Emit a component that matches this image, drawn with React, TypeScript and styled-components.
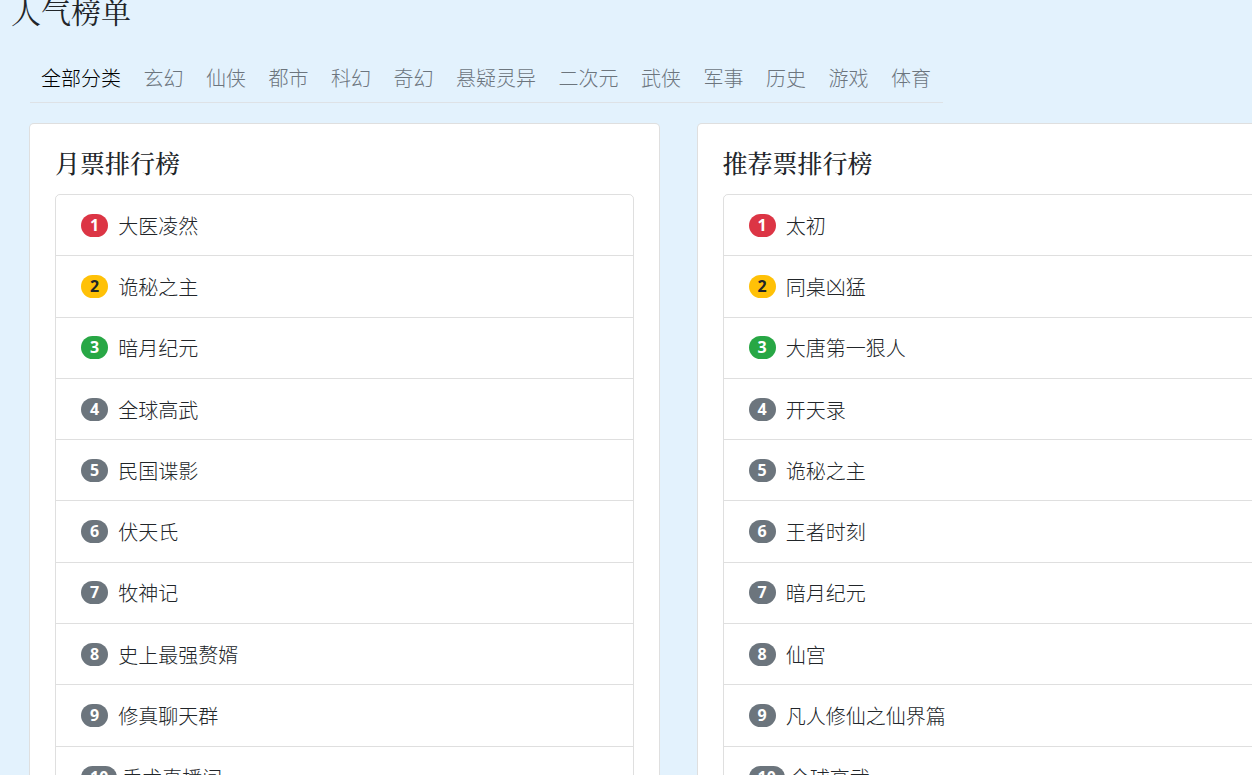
import React from "react";
import styled, { createGlobalStyle } from "styled-components";

const GlobalStyle = createGlobalStyle`
  *, *::before, *::after { box-sizing: border-box; }
  body {
    margin: 0;
    background: #e3f2fd;
    color: #212529;
    font-family: "Noto Sans", "Noto Sans CJK SC", sans-serif;
    font-size: 20px;
    font-weight: 300;
    line-height: 30px;
  }
`;

const Page = styled.div`
  height: 100vh;
  overflow: hidden;
`;

const PageTitle = styled.h1`
  margin: 0;
  padding-left: 11px;
  font-family: "Noto Serif CJK SC", "Noto Serif SC", "Noto Sans CJK SC", serif;
  font-size: 30px;
  font-weight: 400;
  line-height: 20px;
`;

const Tabs = styled.nav`
  display: flex;
  justify-content: space-between;
  max-width: 913px;
  margin: 34px 0 20px 30px;
  padding: 10px 12px 8px 11px;
  border-bottom: 1px solid #dee2e6;
`;

const Tab = styled.a<{ $active?: boolean }>`
  color: ${(p) => (p.$active ? "#000" : "#6c757d")};
  text-decoration: none;
  white-space: nowrap;
`;

const Boards = styled.main`
  display: grid;
  grid-template-columns: 1fr 1fr;
  gap: 37px;
  margin: 0 -75px 0 29px;
`;

const Card = styled.section`
  padding: 21px 25px 25px;
  background: #fff;
  border: 1px solid rgba(0, 0, 0, 0.125);
  border-radius: 5px;
`;

const CardTitle = styled.h2`
  margin: 0 0 14px;
  font-family: "Noto Serif CJK SC", "Noto Serif SC", "Noto Sans CJK SC", serif;
  font-size: 25px;
  font-weight: 500;
  line-height: 35px;
`;

const RankList = styled.ol`
  display: grid;
  grid-auto-rows: 1fr;
  min-height: 615px;
  margin: 0;
  padding: 0;
  list-style: none;
  border: 1px solid rgba(0, 0, 0, 0.125);
  border-radius: 5px;
`;

const RankRow = styled.li`
  display: flex;
  align-items: center;
  padding: 0 25px;
  border-bottom: 1px solid rgba(0, 0, 0, 0.125);

  &:last-child {
    border-bottom: 0;
  }
`;

const badgeColors: Record<number, string> = { 1: "#dc3545", 2: "#ffc107", 3: "#28a745" };

const Badge = styled.span<{ $rank: number }>`
  min-width: 27px;
  margin-right: ${(p) => (p.$rank > 9 ? 5 : 10)}px;
  padding: 0 9px;
  border-radius: 12px;
  background: ${(p) => badgeColors[p.$rank] ?? "#6c757d"};
  color: ${(p) => (p.$rank === 2 ? "#212529" : "#fff")};
  font-size: 16px;
  font-weight: 700;
  line-height: 23px;
  text-align: center;
`;

const Book = styled.a`
  padding-top: 3px;
  color: #212529;
  text-decoration: none;
`;

const categories = [
  "全部分类", "玄幻", "仙侠", "都市", "科幻", "奇幻", "悬疑灵异",
  "二次元", "武侠", "军事", "历史", "游戏", "体育",
];

const boards = [
  {
    title: "月票排行榜",
    books: ["大医凌然", "诡秘之主", "暗月纪元", "全球高武", "民国谍影", "伏天氏", "牧神记", "史上最强赘婿", "修真聊天群", "手术直播间"],
  },
  {
    title: "推荐票排行榜",
    books: ["太初", "同桌凶猛", "大唐第一狠人", "开天录", "诡秘之主", "王者时刻", "暗月纪元", "仙宫", "凡人修仙之仙界篇", "全球高武"],
  },
];

export default function App() {
  return (
    <Page lang="zh-CN">
      <GlobalStyle />
      <PageTitle>人气榜单</PageTitle>
      <Tabs>
        {categories.map((name, i) => (
          <Tab key={name} href="#" $active={i === 0}>{name}</Tab>
        ))}
      </Tabs>
      <Boards>
        {boards.map((board) => (
          <Card key={board.title}>
            <CardTitle>{board.title}</CardTitle>
            <RankList>
              {board.books.map((book, i) => (
                <RankRow key={book}>
                  <Badge $rank={i + 1}>{i + 1}</Badge>
                  <Book href="#">{book}</Book>
                </RankRow>
              ))}
            </RankList>
          </Card>
        ))}
      </Boards>
    </Page>
  );
}
